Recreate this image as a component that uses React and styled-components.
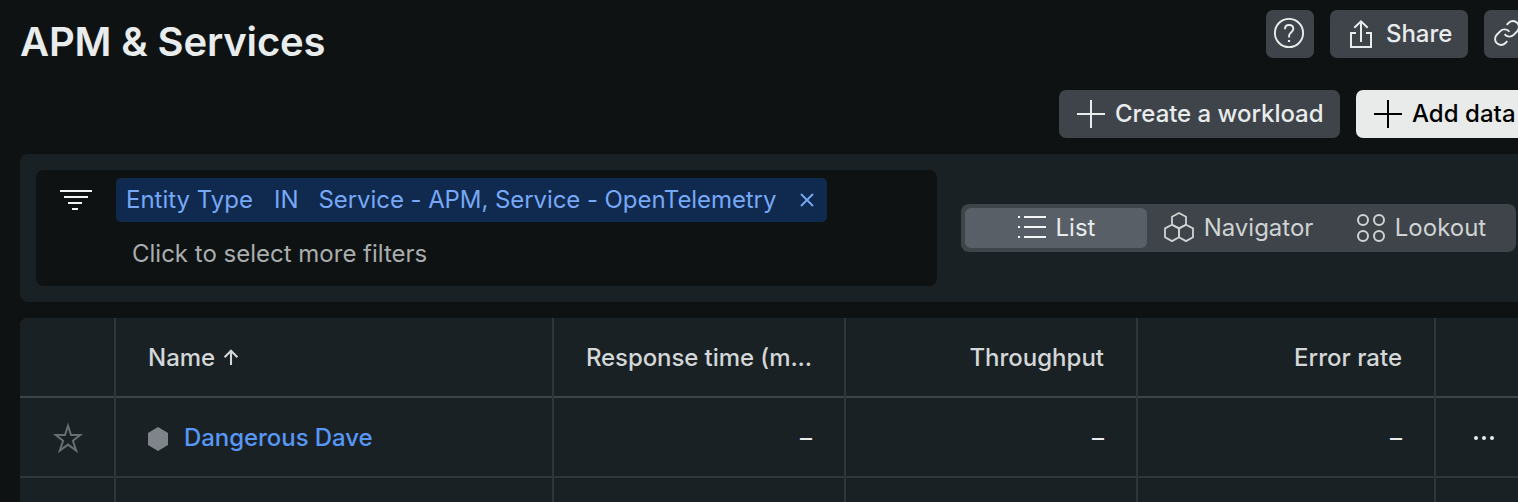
import React from "react";
import styled, { createGlobalStyle } from "styled-components";

const GlobalStyle = createGlobalStyle`
  *, *::before, *::after { box-sizing: border-box; }
  html, body { margin: 0; height: 502px; overflow: hidden; background: #0e1213; }
  body { font-family: Inter, "Liberation Sans", sans-serif; font-size: 24px; line-height: 32px; }
  button { font: inherit; border: 0; margin: 0; }
  svg { display: block; flex: none; }
`;

const Viewport = styled.div`
  width: 1518px;
  height: 502px;
  overflow: hidden;
`;

const Page = styled.main`
  width: 1532px;
  padding-left: 20px;
`;

const Header = styled.header`
  display: flex;
  justify-content: space-between;
  align-items: center;
  height: 68px;
`;

const Title = styled.h1`
  margin: 16px 0 0;
  font-size: 40px;
  line-height: 48px;
  font-weight: 600;
  letter-spacing: -0.15px;
  color: #e9ecec;
`;

const Actions = styled.div`
  display: flex;
  justify-content: flex-end;
  gap: 16px;
`;

const SubHeader = styled(Actions)`
  padding: 22px 0 16px;
`;

const Button = styled.button`
  display: flex;
  align-items: center;
  justify-content: flex-start;
  gap: 8px;
  height: 48px;
  padding: ${(p) => (p.$icon ? "0 8px" : "0 16px")};
  width: ${(p) => p.$width}px;
  border-radius: 7px;
  font-weight: 500;
  letter-spacing: ${(p) => (p.$primary ? 0.04 : -0.04)}px;
  white-space: nowrap;
  background: ${(p) => (p.$primary ? "#e9ebeb" : "#3e4449")};
  color: ${(p) => (p.$primary ? "#000" : "#e9ecec")};
`;

const FilterBar = styled.section`
  display: flex;
  align-items: center;
  gap: 24px;
  height: 148px;
  padding: 16px;
  border-radius: 8px;
  background: #1a2124;
`;

const FilterBox = styled.div`
  flex: 1;
  height: 116px;
  display: flex;
  align-items: flex-start;
  padding: 8px 24px;
  gap: 24px;
  border-radius: 8px;
  background: #0e1213;
`;

const FilterIcon = styled.svg`
  margin-top: 12px;
`;

const FilterContent = styled.div`
  display: flex;
  flex-direction: column;
  align-items: flex-start;
`;

const Chip = styled.div`
  display: flex;
  align-items: center;
  width: 711px;
  height: 44px;
  padding: 0 13px 0 10px;
  border-radius: 5px;
  background: #10294f;
  color: #77a8f5;
  white-space: nowrap;
`;

const ChipPart = styled.span`
  margin-right: ${(p) => p.$after}px;
  letter-spacing: ${(p) => p.$tracking || 0}px;
`;

const Placeholder = styled.div`
  padding: 16px 0 0 16px;
  color: #a9adae;
`;

const Segmented = styled.div`
  display: grid;
  grid-template-columns: 182px 183px 182px;
  width: 555px;
  height: 48px;
  padding: 4px;
  border-radius: 8px;
  background: #3e4449;
`;

const Segment = styled.button`
  display: flex;
  align-items: center;
  justify-content: center;
  gap: 10px;
  padding: 0 0 0 ${(p) => p.$inset || 0}px;
  border-radius: 6px;
  background: ${(p) => (p.$active ? "#585f66" : "transparent")};
  color: ${(p) => (p.$active ? "#e9ecec" : "#cfd3d4")};
`;

const Table = styled.section`
  margin-top: 16px;
  border-radius: 8px 8px 0 0;
  overflow: hidden;
`;

const Row = styled.div`
  display: grid;
  grid-template-columns: 94px 436px 290px 290px 296px 96px;
  column-gap: 2px;
  height: 80px;
  background: #2f363a;
`;

const Cell = styled.div`
  display: flex;
  align-items: center;
  justify-content: ${(p) => p.$align || "flex-start"};
  padding: 2px 32px 0;
  overflow: hidden;
  white-space: nowrap;
  background: #1a2124;
  border-bottom: 2px solid ${(p) => (p.$head ? "#3d4548" : "#2f363a")};
  color: ${(p) => (p.$head ? "#d3d7d8" : "#e9ecec")};
  font-weight: ${(p) => (p.$head ? 500 : 400)};
`;

const IconCell = styled(Cell)`
  padding: 2px 0 0 ${(p) => p.$inset || 0}px;
`;

const HeadLabel = styled.span`
  letter-spacing: ${(p) => p.$tracking || 0}px;
`;

const SortIcon = styled.svg`
  margin-left: 8px;
`;

const EntityIcon = styled.svg`
  margin-top: 2px;
`;

const EntityLink = styled.a`
  margin-left: 16px;
  color: #5797f5;
  font-weight: 500;
  letter-spacing: -0.06px;
`;

function HelpIcon() {
  return (
    <svg width="32" height="32" viewBox="0 0 32 32" fill="none" stroke="currentColor" strokeWidth="1.9">
      <circle cx="15" cy="15" r="14.1" />
      <path d="M10.9 11.3c0-2.7 1.7-4.3 4.2-4.3 2.4 0 4.2 1.5 4.2 3.8 0 3.8-4.2 3.6-4.2 6.9V19.5" />
      <path d="M15 22v2" strokeWidth="2.2" />
    </svg>
  );
}

function ShareIcon() {
  return (
    <svg width="32" height="32" viewBox="0 0 32 32" fill="none" stroke="currentColor" strokeWidth="2">
      <path d="M10 15H5v14h20V15h-5" />
      <path d="M15 24V4" />
      <path d="M8.3 9.8L15 3.3l6.7 6.5" />
    </svg>
  );
}

function LinkIcon() {
  return (
    <svg width="32" height="32" viewBox="-0.5 -0.5 26.667 26.667" fill="none" stroke="currentColor" strokeWidth="1.6">
      <path d="M10 13a5 5 0 0 0 7.54.54l3-3a5 5 0 0 0-7.07-7.07l-1.72 1.71" />
      <path d="M14 11a5 5 0 0 0-7.54-.54l-3 3a5 5 0 0 0 7.07 7.07l1.71-1.71" />
    </svg>
  );
}

function PlusIcon() {
  return (
    <svg width="32" height="32" viewBox="0 0 32 32" stroke="currentColor" strokeWidth="2">
      <path d="M2 16h28M16 2v28" />
    </svg>
  );
}

function ListIcon() {
  return (
    <svg width="28" height="32" viewBox="0 0 28 32" stroke="#f3f5f5" strokeWidth="2">
      <path d="M0 5h2M6 5h22M0 15h2M6 15h22M0 25h2M6 25h22" />
    </svg>
  );
}

function NavigatorIcon() {
  return (
    <svg width="30" height="32" viewBox="0 0 30 32" fill="none" stroke="currentColor" strokeWidth="1.8" strokeLinejoin="round">
      <path d="M15 1l7 3.7v8.1l-7 3.6-7-3.6V4.7z" />
      <path d="M8 12.8l7 3.6v8.8l-7 3.9-7-3.9v-8.8z" />
      <path d="M22 12.8l7 3.6v8.8l-7 3.9-7-3.9v-8.8z" />
    </svg>
  );
}

function LookoutIcon() {
  return (
    <svg width="28" height="32" viewBox="0 0 28 32" fill="none" stroke="currentColor" strokeWidth="2">
      <circle cx="6" cy="8" r="5" />
      <circle cx="22" cy="8" r="5" />
      <circle cx="6" cy="24" r="5" />
      <circle cx="22" cy="24" r="5" />
    </svg>
  );
}

function StarIcon() {
  return (
    <svg width="34" height="34" viewBox="0 0 34 34" fill="none" stroke="#686f73" strokeWidth="2">
      <path d="M17 4.7L20 14H29.3L21.9 19.8L25.2 29.5L17 23.6L8.8 29.5L12.1 19.8L4.7 14H14z" />
    </svg>
  );
}

const metrics = ["response", "throughput", "errors"];

export default function App() {
  return (
    <Viewport>
      <GlobalStyle />
      <Page>
        <Header>
          <Title>APM &amp; Services</Title>
          <Actions>
            <Button $icon $width={48} aria-label="Help"><HelpIcon /></Button>
            <Button $width={138}><ShareIcon />Share</Button>
            <Button $icon $width={48} aria-label="Copy link"><LinkIcon /></Button>
          </Actions>
        </Header>
        <SubHeader>
          <Button $width={281}><PlusIcon />Create a workload</Button>
          <Button $primary $width={176}><PlusIcon />Add data</Button>
        </SubHeader>

        <FilterBar>
          <FilterBox>
            <FilterIcon width="32" height="20" viewBox="0 0 32 20" fill="#f3f5f5">
              <path d="M0 0h32v2H0zM4 6h24v2H4zM8 12h14v2H8zM12 18h6v2h-6z" />
            </FilterIcon>
            <FilterContent>
              <Chip>
                <ChipPart $after={21}>Entity Type</ChipPart>
                <ChipPart $after={20}>IN</ChipPart>
                <ChipPart $after={24} $tracking={-0.075}>Service - APM, Service - OpenTelemetry</ChipPart>
                <svg width="14" height="14" viewBox="0 0 14 14" stroke="currentColor" strokeWidth="1.8">
                  <path d="M1 1l12 12M13 1L1 13" />
                </svg>
              </Chip>
              <Placeholder>Click to select more filters</Placeholder>
            </FilterContent>
          </FilterBox>
          <Segmented>
            <Segment $active $inset={1}><ListIcon />List</Segment>
            <Segment><NavigatorIcon />Navigator</Segment>
            <Segment $inset={1}><LookoutIcon />Lookout</Segment>
          </Segmented>
        </FilterBar>

        <Table>
          <Row>
            <IconCell $head />
            <Cell $head>
              Name
              <SortIcon width="16" height="18" viewBox="0 0 16 18" fill="none" stroke="currentColor" strokeWidth="2.1">
                <path d="M8 16V2M1.6 8.2L8 1.8 14.4 8.2" />
              </SortIcon>
            </Cell>
            <Cell $head $align="flex-end"><HeadLabel $tracking={-0.08}>Response time (m...</HeadLabel></Cell>
            <Cell $head $align="flex-end">Throughput</Cell>
            <Cell $head $align="flex-end">Error rate</Cell>
            <IconCell $head />
          </Row>
          <Row>
            <IconCell $align="center" $inset={2}><StarIcon /></IconCell>
            <Cell>
              <EntityIcon width="20" height="24" viewBox="0 0 20 24" fill="#7f848a">
                <path d="M10 0l10 6v12l-10 6L0 18V6z" />
              </EntityIcon>
              <EntityLink>Dangerous Dave</EntityLink>
            </Cell>
            {metrics.map((m) => (
              <Cell key={m} $align="flex-end">–</Cell>
            ))}
            <IconCell $align="center">
              <svg width="20" height="4" viewBox="0 0 20 4" fill="#e9ecec">
                <circle cx="2" cy="2" r="2" />
                <circle cx="10" cy="2" r="2" />
                <circle cx="18" cy="2" r="2" />
              </svg>
            </IconCell>
          </Row>
          <Row>
            <IconCell />
            <Cell />
            <Cell />
            <Cell />
            <Cell />
            <IconCell />
          </Row>
        </Table>
      </Page>
    </Viewport>
  );
}
